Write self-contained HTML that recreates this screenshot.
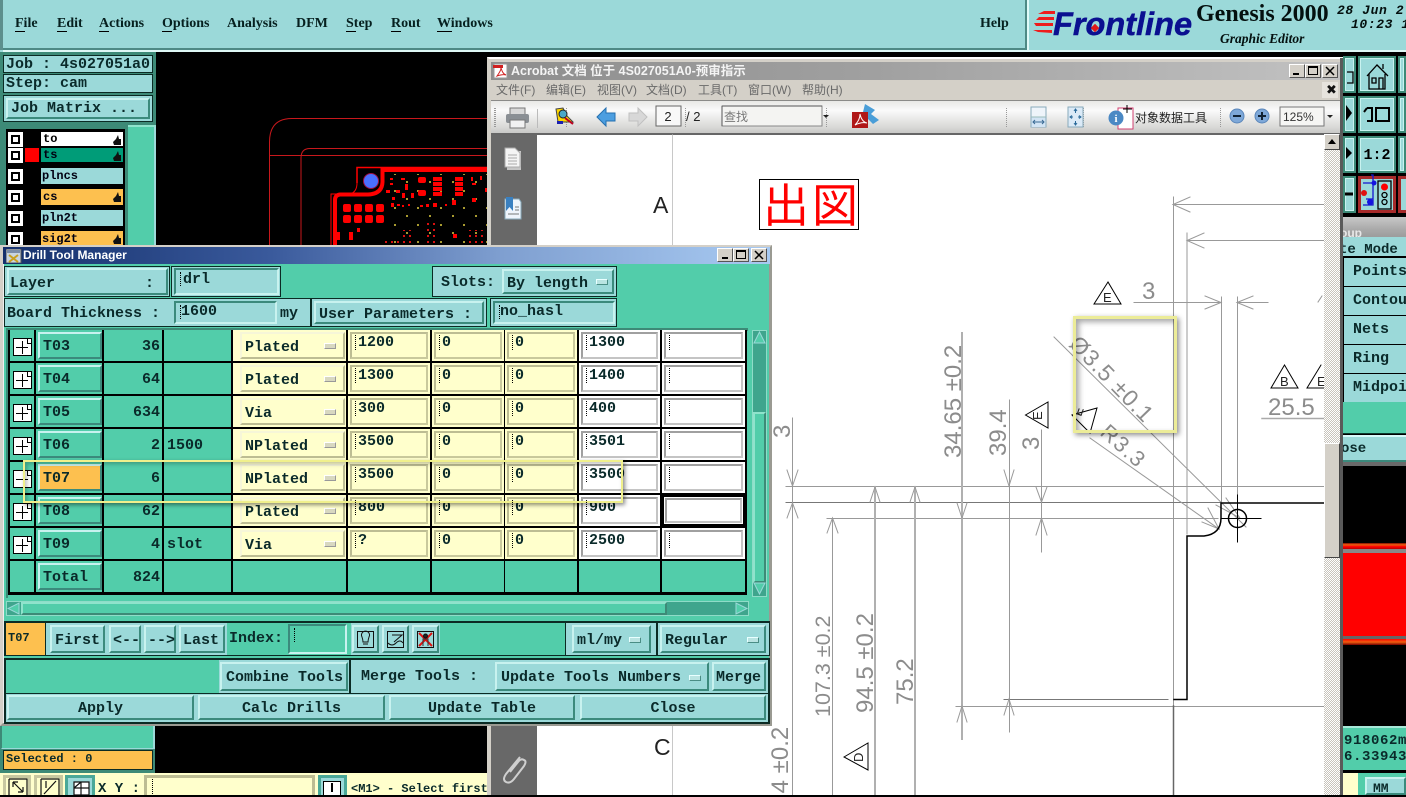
<!DOCTYPE html>
<html><head><meta charset="utf-8">
<style>
html,body{margin:0;padding:0;background:#000;}
*,*::before,*::after{box-sizing:border-box;}
body{position:relative;width:1406px;height:795px;overflow:hidden;font:bold 15px/1 "Liberation Mono","Noto Sans CJK SC",monospace;color:#0a2a2a;}
div,span,b,i,svg{position:absolute;display:block;}
svg text{font-weight:normal;}
.t{white-space:pre;font-weight:bold;font-style:normal;}
.up{background:#9bd9d9;border:2px solid;border-color:#c8f2ef #3b8a7c #3b8a7c #c8f2ef;white-space:pre;}
.dn{background:#9bd9d9;border:2px solid;border-color:#3b8a7c #c8f2ef #c8f2ef #3b8a7c;white-space:pre;}
.g{background:#52cdaa;}
.lt{background:#9bd9d9;}
.blk{background:#000;}
.ctr{text-align:center;}
.f::before{content:"";position:absolute;left:4px;top:2px;width:1px;height:14px;border-left:1px dotted #000;}
.ind{width:12px;height:6px;background:#b9e4e2;border:1px solid;border-color:#e8ffff #4a8d85 #4a8d85 #e8ffff;}
.r{left:0;width:739px;height:31px;}
.pb{left:5px;top:8px;width:19px;height:18px;border:1px solid #000;background:linear-gradient(#000,#000) 13px 0/1px 5px no-repeat,linear-gradient(#000,#000) 13px 4px/4px 1px no-repeat,#fff;}
.pb::before{content:"";position:absolute;left:2px;top:8px;width:12px;height:1px;background:#000;}
.pb::after{content:"";position:absolute;left:8px;top:2px;width:1px;height:13px;background:#000;}
.pb.m::after{display:none;}
.tb{left:30px;top:2px;width:64px;height:27px;padding:5px 0 0 3px;}
.cnt{left:96px;top:0;width:56px;height:31px;text-align:right;line-height:34px;}
.nt{left:159px;top:0;line-height:34px;white-space:pre;}
.ddc{left:225px;top:0;width:113px;height:31px;background:#ffffcc;}
.dd{left:232px;top:2px;width:105px;height:27px;background:#ffffcc;border:2px solid;border-color:#f6f6d8 #bdbd93 #bdbd93 #f6f6d8;padding:6px 0 0 3px;white-space:pre;}
.dd i{left:82px;top:9px;width:12px;height:6px;background:#d8d8c0;border:1px solid;border-color:#fff #999 #999 #fff;}
.c{top:0;height:31px;background:#ffffcc;}
.c i{left:2px;top:2px;right:2px;bottom:2px;border:2px solid;border-color:#bdbd93 #c9c99c #c9c99c #bdbd93;}
.w{background:#fff;}
.w i{border-color:#a0a0a0 #c4c4c4 #c4c4c4 #a0a0a0;}
.c s{position:absolute;left:10px;top:5px;text-decoration:none;white-space:pre;}
.c::before{content:"";position:absolute;left:7px;top:5px;width:1px;height:15px;border-left:1px dotted #000;z-index:2;}
.nc::before{display:none;}
.c1{left:340px;width:82px;}.c2{left:424px;width:72px;}.c3{left:497px;width:72px;}.c4{left:571px;width:81px;}.c5{left:654px;width:83px;}
.cb{left:8px;width:15px;height:15px;background:#fff;border:3px solid #fff;}
.cb::after{content:"";position:absolute;left:0;top:0;width:9px;height:9px;border:2px solid #000;}
.tb2{background:#9bd9d9;border:2px solid #3d8a77;box-shadow:inset 1px 1px 0 #c8f2ef,inset -1px -1px 0 #c8f2ef;}
</style></head>
<body>
<!-- top menu -->
<div style="left:0;top:0;width:1406px;height:52px;background:#9bd9d9"></div>
<div style="left:0;top:0;width:3px;height:50px;background:#5d8f8d"></div>
<div style="left:3px;top:48px;width:1024px;height:2px;background:#4e8a86"></div>
<div style="left:1025px;top:0;width:2px;height:50px;background:#4e8a86"></div>
<div style="left:1027px;top:0;width:2px;height:52px;background:#e0fbf9"></div>
<div style="left:3px;top:50px;width:1403px;height:2px;background:#dff8f6"></div>
<div style="font:bold 14px 'Liberation Serif',serif;left:0;top:0;width:1030px;height:48px;color:#06201f">
<span class="t" style="left:15px;top:16px">File</span><span style="left:15px;top:31px;width:10px;height:1px;background:#000"></span>
<span class="t" style="left:57px;top:16px">Edit</span><span style="left:57px;top:31px;width:10px;height:1px;background:#000"></span>
<span class="t" style="left:99px;top:16px">Actions</span><span style="left:99px;top:31px;width:10px;height:1px;background:#000"></span>
<span class="t" style="left:162px;top:16px">Options</span><span style="left:162px;top:31px;width:10px;height:1px;background:#000"></span>
<span class="t" style="left:227px;top:16px">Analysis</span>
<span class="t" style="left:296px;top:16px">DFM</span>
<span class="t" style="left:346px;top:16px">Step</span><span style="left:346px;top:31px;width:10px;height:1px;background:#000"></span>
<span class="t" style="left:391px;top:16px">Rout</span><span style="left:391px;top:31px;width:10px;height:1px;background:#000"></span>
<span class="t" style="left:437px;top:16px">Windows</span><span style="left:437px;top:31px;width:15px;height:1px;background:#000"></span>
<span class="t" style="left:980px;top:16px">Help</span>
</div>
<!-- logo -->
<svg style="left:1030px;top:8px" width="30" height="30"><g fill="#ee1c1c"><polygon points="14,3 25,3 25,6 8,6"/><polygon points="9,9 24,9 24,12 6,12"/><polygon points="4,15 23,15 23,18 6,18"/><polygon points="3,22 22,22 22,25 8,24"/></g></svg>
<span class="t" style="left:1053px;top:6px;font:italic bold 32.5px 'Liberation Sans',sans-serif;color:#0b1090;white-space:pre;-webkit-text-stroke:.5px #0b1090">Frontline</span>
<span style="left:1092px;top:25px;width:6px;height:6px;background:#e01818;transform:rotate(45deg)"></span>
<span class="t" style="left:1196px;top:1px;font:bold 24px 'Liberation Serif',serif;color:#04100f;white-space:pre">Genesis 2000</span>
<span class="t" style="left:1220px;top:31px;font:italic bold 13.5px 'Liberation Serif',serif;color:#04100f;white-space:pre">Graphic Editor</span>
<span class="t" style="left:1337px;top:3px;font:italic bold 13px 'Liberation Mono',monospace;letter-spacing:.6px;color:#04100f">28 Jun 2</span>
<span class="t" style="left:1351px;top:17px;font:italic bold 13px 'Liberation Mono',monospace;letter-spacing:.6px;color:#04100f">10:23 1</span>

<!-- left panel -->
<div style="left:0;top:52px;width:156px;height:194px;background:#3d8a77"></div>
<div class="lt" style="left:3px;top:55px;width:150px;height:18px;border:1px solid #0b2b24"></div>
<div class="lt" style="left:3px;top:74px;width:150px;height:19px;border:1px solid #0b2b24"></div>
<span class="t" style="left:6px;top:57px">Job : 4s027051a0</span>
<span class="t" style="left:6px;top:76px">Step: cam</span>
<div class="lt" style="left:3px;top:95px;width:150px;height:27px;border:1px solid #0b2b24"></div>
<div class="up" style="left:6px;top:98px;width:144px;height:21px;padding:1px 0 0 3px">Job Matrix ...</div>
<div class="g" style="left:128px;top:125px;width:28px;height:125px;border-top:2px solid #8fe3cc;border-right:2px solid #9bd9d9"></div>
<div class="blk" style="left:6px;top:129px;width:119px;height:120px"></div>
<div style="left:41px;top:132px;width:82px;height:14px;background:#fff"></div><span class="t" style="left:43px;top:133px;font-size:12px;color:#000">to</span>
<div style="left:41px;top:148px;width:82px;height:14px;background:#009c78"></div><span class="t" style="left:43px;top:149px;font-size:12px;color:#001">ts</span>
<div style="left:25px;top:148px;width:14px;height:14px;background:#f00"></div>
<div class="lt" style="left:41px;top:168px;width:82px;height:16px"></div><span class="t" style="left:42px;top:170px;font-size:12px;color:#001">plncs</span>
<div style="left:41px;top:189px;width:82px;height:16px;background:#fdc04f"></div><span class="t" style="left:43px;top:191px;font-size:12px;color:#001">cs</span>
<div class="lt" style="left:41px;top:210px;width:82px;height:16px"></div><span class="t" style="left:42px;top:212px;font-size:12px;color:#001">pln2t</span>
<div style="left:41px;top:231px;width:82px;height:16px;background:#fdc04f"></div><span class="t" style="left:42px;top:233px;font-size:12px;color:#001">sig2t</span>
<div class="cb" style="top:132px"></div><div class="cb" style="top:148px"></div><div class="cb" style="top:169px"></div><div class="cb" style="top:190px"></div><div class="cb" style="top:211px"></div><div class="cb" style="top:232px"></div>
<svg style="left:112px;top:134px" width="10" height="110" fill="#111"><path d="M1 8 L4 5 L6 1 L7 5 L9 5 L9 11 L2 11Z"/><path d="M1 24 L4 21 L6 17 L7 21 L9 21 L9 27 L2 27Z"/><path d="M1 65 L4 62 L6 58 L7 62 L9 62 L9 68 L2 68Z"/><path d="M1 107 L4 104 L6 100 L7 104 L9 104 L9 110 L2 110Z"/></svg>

<!-- pcb canvas -->
<div class="blk" style="left:156px;top:52px;width:334px;height:195px"></div>
<svg style="left:156px;top:52px" width="334" height="195" viewBox="156 52 334 195">
<defs>
<pattern id="dots" x="0" y="0" width="6" height="6" patternUnits="userSpaceOnUse"><rect x="1" y="1" width="2" height="2" fill="#d81010"/></pattern>
<pattern id="dots2" x="0" y="0" width="23" height="17" patternUnits="userSpaceOnUse"><rect x="3" y="3" width="2" height="2" fill="#a89a30"/><rect x="15" y="11" width="2" height="2" fill="#a89a30"/></pattern>
</defs>
<g fill="none" stroke="#c8181c" stroke-width="1">
<path d="M269.5 247V142Q269.5 118.500 292 118.500H490"/>
<path d="M269 155.500H490"/>
<path d="M301 247V158Q301 148.500 310 148.500H490"/>
</g>
<path d="M357 183V167.500H490" fill="none" stroke="#f00" stroke-width="1.500"/>
<path d="M490 170H382.500V182Q382 194 368 194.500H340Q335 195 335 200V247" fill="none" stroke="#f00" stroke-width="4"/>
<path d="M357 183Q357 192 350 194H331V247" fill="none" stroke="#f00" stroke-width="1"/>
<rect x="386" y="174" width="104" height="73" fill="url(#dots2)"/>
<circle cx="371" cy="181" r="7.500" fill="#4a70ff" stroke="#a01040"/>
<g fill="#f00">
<rect x="343" y="204" width="8" height="8" rx="2"/><rect x="354" y="204" width="8" height="8" rx="2"/><rect x="365" y="204" width="8" height="8" rx="2"/><rect x="376" y="204" width="8" height="8" rx="2"/>
<rect x="343" y="215" width="8" height="8" rx="2"/><rect x="354" y="215" width="8" height="8" rx="2"/><rect x="365" y="215" width="8" height="8" rx="2"/><rect x="376" y="215" width="8" height="8" rx="2"/>
<rect x="418" y="177" width="8" height="6" rx="2"/><rect x="418" y="190" width="8" height="6" rx="2"/>
<rect x="433" y="177" width="9" height="4"/><rect x="433" y="182" width="9" height="4"/><rect x="433" y="187" width="9" height="4"/><rect x="433" y="192" width="9" height="4"/>
<rect x="455" y="177" width="8" height="4"/><rect x="455" y="182" width="8" height="4"/><rect x="455" y="187" width="8" height="4"/><rect x="455" y="192" width="8" height="4"/>
<rect x="336" y="232" width="4" height="8"/><rect x="349" y="232" width="4" height="8"/><rect x="453" y="234" width="4" height="4"/><rect x="357" y="228" width="3" height="4"/>
<rect x="386" y="190" width="4" height="3"/><rect x="396" y="190" width="4" height="3"/><rect x="405" y="184" width="3" height="6"/><rect x="402" y="193" width="3" height="5"/><rect x="411" y="193" width="3" height="5"/>
<rect x="390" y="178" width="3" height="2"/><rect x="390" y="183" width="3" height="2"/><rect x="401" y="178" width="4" height="2"/>
<rect x="392" y="197" width="3" height="3"/><rect x="391" y="203" width="3" height="4"/><rect x="397" y="204" width="3" height="2"/><rect x="402" y="205" width="2" height="2"/><rect x="408" y="204" width="2" height="2"/>
<rect x="420" y="205" width="3" height="2"/><rect x="426" y="204" width="3" height="3"/><rect x="433" y="203" width="4" height="4"/><rect x="445" y="204" width="2" height="2"/><rect x="452" y="200" width="4" height="5"/>
<rect x="472" y="198" width="4" height="4"/><rect x="472" y="183" width="4" height="2"/><rect x="485" y="188" width="3" height="4"/><rect x="471" y="177" width="2" height="4"/><rect x="480" y="176" width="2" height="4"/>
</g>
<rect x="426" y="219" width="12" height="28" fill="url(#dots)"/>
<rect x="402" y="230" width="12" height="17" fill="url(#dots)"/>
<rect x="468" y="230" width="20" height="17" fill="url(#dots)"/>
<rect x="383" y="241" width="26" height="5" fill="url(#dots)"/>
</svg>

<!-- right panel -->
<div class="blk" style="left:1343px;top:52px;width:63px;height:165px"></div>
<div class="tb2" style="left:1343px;top:56px;width:13px;height:37px"></div>
<div class="tb2" style="left:1343px;top:96px;width:13px;height:37px"></div>
<div class="tb2" style="left:1343px;top:136px;width:13px;height:37px"></div>
<div class="tb2" style="left:1343px;top:176px;width:13px;height:37px"></div>
<div class="tb2" style="left:1358px;top:56px;width:38px;height:37px"></div>
<div class="tb2" style="left:1358px;top:96px;width:38px;height:37px"></div>
<div class="tb2" style="left:1358px;top:136px;width:38px;height:37px"></div>
<div class="tb2" style="left:1398px;top:56px;width:8px;height:37px"></div>
<div class="tb2" style="left:1398px;top:96px;width:8px;height:37px"></div>
<div class="tb2" style="left:1398px;top:136px;width:8px;height:37px"></div>
<div style="left:1358px;top:176px;width:38px;height:37px;background:#9bd9d9;border:3px solid #a62a2a"></div>
<div style="left:1398px;top:176px;width:8px;height:37px;background:#9bd9d9;border:3px solid #a62a2a;border-right:0"></div>
<svg style="left:1343px;top:55px" width="63" height="160" fill="none" stroke="#000" stroke-width="1.300">
<path d="M4 17H10V28H4"/><path d="M24 21L34 10L45 21M26 19V34H42V19M29 23H33V28H29ZM36 23H40V34H36ZM40 14V9"/>
<path fill="#000" stroke="none" d="M3 50L9 58L3 66Z"/>
<path d="M33 53H46V66H33Z" stroke-width="2"/><path d="M24 53H29V66H24M24 53L21 57" stroke-width="2"/>
<path fill="#000" stroke="none" d="M3 92L9 98L3 104Z"/>
<text x="34" y="104" text-anchor="middle" fill="#000" stroke="none" font-family="Liberation Mono" style="font-weight:bold" font-size="15">1:2</text>
<path d="M2 139H10" stroke-width="3"/>
<path d="M28 120H30V150H20M30 128H20M30 144H23" stroke="#1414d0"/>
<circle cx="21" cy="138" r="3" fill="#e01010" stroke="none"/><circle cx="31" cy="128" r="2.500" fill="#1414e0" stroke="none"/><circle cx="27" cy="147" r="3" fill="#1414e0" stroke="none"/>
<rect x="35" y="126" width="13" height="28"/><circle cx="41.500" cy="132" r="3.500" fill="#f00" stroke="none"/><circle cx="41.500" cy="140" r="2.500"/><circle cx="41.500" cy="147" r="2.500"/>
</svg>
<div style="left:1343px;top:217px;width:63px;height:20px;background:linear-gradient(#c8c8c8,#aaa 60%,#9c9c9c)"></div>
<span class="t" style="left:1340px;top:226px;font:bold 12px 'Liberation Sans',sans-serif;color:#e8e8e8">oup</span>
<div class="lt" style="left:1343px;top:237px;width:63px;height:20px"></div>
<span class="t" style="left:1339px;top:243px;font-size:14px">te Mode</span>
<div class="blk" style="left:1343px;top:256px;width:63px;height:146px"></div>
<div class="lt" style="left:1344px;top:258px;width:62px;height:28px"></div>
<div class="lt" style="left:1344px;top:287px;width:62px;height:28px"></div>
<div class="lt" style="left:1344px;top:316px;width:62px;height:28px"></div>
<div class="lt" style="left:1344px;top:345px;width:62px;height:28px"></div>
<div class="lt" style="left:1344px;top:374px;width:62px;height:28px"></div>
<span class="t" style="left:1353px;top:264px">Points</span>
<span class="t" style="left:1353px;top:293px">Contou</span>
<span class="t" style="left:1353px;top:322px">Nets</span>
<span class="t" style="left:1353px;top:351px">Ring</span>
<span class="t" style="left:1353px;top:380px">Midpoi</span>
<div class="g" style="left:1343px;top:402px;width:63px;height:32px;border-bottom:1px solid #0c3a2d"></div>
<div class="lt" style="left:1343px;top:435px;width:63px;height:27px;border-top:2px solid #d8fafa;border-bottom:2px solid #3b8a7c"></div>
<span class="t" style="left:1341px;top:442px;font-size:14px">ose</span>
<div style="left:1343px;top:462px;width:63px;height:4px;background:#6a6a6a"></div>
<div class="blk" style="left:1343px;top:466px;width:63px;height:77px"></div>
<div style="left:1343px;top:543px;width:63px;height:6px;background:linear-gradient(#7a0c00,#f06010 30%,#f00 60%,#b00)"></div>
<div style="left:1343px;top:549px;width:63px;height:4px;background:#888"></div>
<div style="left:1343px;top:553px;width:63px;height:83px;background:#f00"></div>
<div style="left:1343px;top:636px;width:63px;height:3px;background:#666"></div>
<div style="left:1343px;top:639px;width:63px;height:6px;background:linear-gradient(#f00,#f06010 50%,#700)"></div>
<div class="blk" style="left:1343px;top:645px;width:63px;height:81px"></div>
<div class="g" style="left:1343px;top:726px;width:63px;height:44px;border-top:2px solid #a8e8d8"></div>
<span class="t" style="left:1344px;top:734px;font-size:14px;letter-spacing:.6px">918062m</span>
<span class="t" style="left:1344px;top:750px;font-size:14px;letter-spacing:.6px">6.33943</span>
<div class="blk" style="left:1343px;top:770px;width:63px;height:3px"></div>
<div style="left:1343px;top:773px;width:63px;height:22px;background:#52cdaa"></div>
<div style="left:1343px;top:773px;width:15px;height:22px;background:#ffffcc"></div>
<div class="up" style="left:1365px;top:777px;width:41px;height:18px;padding:3px 0 0 6px;font-size:13px">MM</div>

<!-- bottom left -->
<div class="g" style="left:0;top:725px;width:155px;height:25px;border-right:2px solid #9bd9d9;border-bottom:2px solid #9bd9d9;border-left:2px solid #3d8a77"></div>
<div style="left:0;top:749px;width:156px;height:24px;background:#3d8a77"></div>
<div style="left:3px;top:750px;width:150px;height:20px;background:#fdc04f;border:1px solid #0b2b24"></div>
<span class="t" style="left:6px;top:753px;font-size:12px">Selected : 0</span>
<div style="left:0;top:773px;width:490px;height:22px;background:#ffffcc"></div>
<div style="left:3px;top:775px;width:28px;height:20px;background:#ffffcc;border:3px solid #c8c8a0;border-bottom:0"></div>
<div style="left:34px;top:775px;width:29px;height:20px;background:#ffffcc;border:3px solid #c8c8a0;border-bottom:0"></div>
<div style="left:65px;top:775px;width:30px;height:20px;background:#9bd9d9;border:3px solid #4aa898;border-bottom:0"></div>
<svg style="left:3px;top:775px" width="95" height="20" fill="none" stroke="#111" stroke-width="1.200">
<path d="M6 4H24V20M6 4V20M10 7L20 17M10 7H15M10 7V12M20 17H15M20 17V12"/>
<path d="M38 4H56V20M38 4V20M53 6L41 19M43 6V13"/>
<path d="M71 7H86V20H71ZM71 13H86M78 7V20M71 13L78 7" fill="#fff"/>
</svg>
<span class="t" style="left:98px;top:782px;font-size:14px">X Y :</span>
<div style="left:144px;top:775px;width:171px;height:20px;background:#ffffcc;border:3px solid #bdbd93;border-bottom:0"></div>
<div style="left:152px;top:779px;width:1px;height:15px;border-left:1px dotted #000"></div>
<div style="left:318px;top:775px;width:29px;height:20px;background:#9bd9d9;border:3px solid #4aa898;border-bottom:0"></div>
<div style="left:323px;top:781px;width:18px;height:14px;background:#fff;border:1px solid #000;border-bottom:0"></div>
<div style="left:331px;top:783px;width:2px;height:9px;background:#000"></div>
<span class="t" style="left:351px;top:783px;font-size:12px">&lt;M1&gt; - Select first</span>
<div class="blk" style="left:155px;top:725px;width:333px;height:48px"></div>

<!-- Acrobat window -->
<div style="left:487px;top:57px;width:856px;height:738px;background:#d4d0c8;border-top:2px solid #fff;border-left:2px solid #d4d0c8"></div>
<div style="left:1340px;top:58px;width:3px;height:737px;background:#5a5a5a"></div>
<div style="left:491px;top:62px;width:849px;height:18px;background:linear-gradient(90deg,#8e8e8e,#a0a0a0 45%,#c2c2c2)"></div>
<svg style="left:493px;top:63px" width="16" height="16"><rect x="1" y="1" width="13" height="14" fill="#fff" stroke="#999"/><rect x="0" y="2" width="10" height="3" fill="#d02020"/><path d="M4 13C7 9 8 7 8 5C9 8 10 11 13 12C10 11 7 12 4 13Z" fill="none" stroke="#d02020"/></svg>
<span class="t" style="left:511px;top:64px;font:bold 12.5px 'Liberation Sans','Noto Sans CJK SC',sans-serif;color:#f4f4f4;line-height:15px">Acrobat 文档 位于 4S027051A0-预审指示</span>
<div style="left:1289px;top:64px;width:16px;height:14px;background:#d4d0c8;border:1px solid;border-color:#fff #555 #555 #fff"></div>
<div style="left:1293px;top:73px;width:6px;height:2px;background:#000"></div>
<div style="left:1305px;top:64px;width:16px;height:14px;background:#d4d0c8;border:1px solid;border-color:#fff #555 #555 #fff"></div>
<div style="left:1308px;top:66px;width:10px;height:9px;border:1px solid #000;border-top-width:2px"></div>
<div style="left:1322px;top:64px;width:16px;height:14px;background:#d4d0c8;border:1px solid;border-color:#fff #555 #555 #fff"></div>
<svg style="left:1325px;top:66px" width="10" height="10" stroke="#000" stroke-width="1.500"><path d="M1 1L9 9M9 1L1 9"/></svg>
<div style="left:491px;top:80px;width:849px;height:20px;background:#d4d0c8"></div>
<div style="font:12px/14px 'Liberation Sans','Noto Sans CJK SC',sans-serif;color:#6a6a6a;left:0;top:0">
<span class="t" style="left:496px;top:83px;font-weight:normal">文件(F)</span>
<span class="t" style="left:546px;top:83px;font-weight:normal">编辑(E)</span>
<span class="t" style="left:597px;top:83px;font-weight:normal">视图(V)</span>
<span class="t" style="left:646px;top:83px;font-weight:normal">文档(D)</span>
<span class="t" style="left:698px;top:83px;font-weight:normal">工具(T)</span>
<span class="t" style="left:748px;top:83px;font-weight:normal">窗口(W)</span>
<span class="t" style="left:802px;top:83px;font-weight:normal">帮助(H)</span>
</div>
<div style="left:1322px;top:82px;width:16px;height:16px;background:#e6e3dd"></div>
<span class="t" style="left:1326px;top:83px;font:bold 13px 'DejaVu Sans',sans-serif;color:#111">✖</span>
<div style="left:491px;top:100px;width:849px;height:35px;background:linear-gradient(#e8e8e6,#fafafa 30%,#d6d6d4 85%,#c8c8c6);border-top:1px solid #8a8a88;border-bottom:2px solid #666"></div>
<svg style="left:491px;top:100px" width="849" height="35">
<g fill="none" stroke="#999" stroke-dasharray="1 1"><path d="M3.500 8V28M4.500 8V28M75.500 8V28M194.500 8V28M335.500 8V28M515.500 8V28M592.500 8V28M729.500 8V28"/></g>
<rect x="46" y="9" width="1" height="19" fill="#bbb"/>
<!-- printer -->
<rect x="19" y="8" width="15" height="7" fill="#d8d8d8" stroke="#777"/><rect x="15" y="14" width="23" height="9" rx="2" fill="#8a8f94"/><rect x="19" y="20" width="15" height="8" fill="#f2f2f2" stroke="#777"/>
<!-- tool -->
<path d="M65 9L72 8L76 16L82 22H67Z" fill="#ffd800" stroke="#444"/><circle cx="72" cy="14" r="4" fill="#4aa8c8" stroke="#222"/><path d="M74 18L82 24" stroke="#c00020" stroke-width="2"/><rect x="66" y="21" width="6" height="3" fill="#1a20b0"/>
<!-- arrows -->
<path d="M106 17L115 8V13H124V21H115V26Z" fill="#4c9ee0" stroke="#2570b0"/>
<path d="M156 17L147 8V13H138V21H147V26Z" fill="#d8d8d8" stroke="#c0c0c0"/>
<rect x="165" y="6" width="25" height="20" fill="#f8f8f8" stroke="#666"/>
<text x="177" y="21" text-anchor="middle" font-family="Liberation Sans" font-size="13" fill="#222">2</text>
<text x="195" y="21" font-family="Liberation Sans" font-size="13" fill="#222">/ 2</text>
<rect x="231" y="6" width="100" height="20" fill="#f4f4f2" stroke="#888"/>
<path d="M231 6H331M231 6V26" stroke="#555" fill="none"/>
<text x="233" y="21" font-family="Noto Sans CJK SC" font-size="12" fill="#777">查找</text>
<path d="M332 15H338L335 18Z" fill="#222"/>
<!-- pdf -->
<path d="M374 4L384 10L380 14L388 20L382 24L374 16L370 20Z" fill="#4a9ed8"/>
<rect x="361" y="12" width="16" height="16" fill="#b01818"/><path d="M364 25C368 21 369 17 369 14C370 19 372 22 376 23C372 22 368 23 364 25Z" fill="none" stroke="#fff"/>
<!-- fit icons -->
<rect x="540" y="7" width="15" height="20" fill="#eef4fa" stroke="#8ab"/><rect x="540.500" y="17" width="14" height="10" fill="#d2e4f4"/><path d="M540 17H555" stroke="#9bb"/><path d="M542 22H553M544 20L542 22L544 24M551 20L553 22L551 24" fill="none" stroke="#3a6a94"/>
<rect x="577" y="7" width="15" height="20" fill="#dbeaf7" stroke="#8ab"/><path d="M584.500 9V13M583 11L584.500 9L586 11M584.500 21V25M583 23L584.500 25L586 23M579 17H582M581 15.500L579 17L581 18.500M587 17H590M588 15.500L590 17L588 18.500" fill="none" stroke="#2a6a9a"/>
<!-- data tool -->
<rect x="627" y="8" width="15" height="21" fill="#fff" stroke="#d04070"/>
<circle cx="625" cy="18" r="7.500" fill="#4a88c4"/><text x="625" y="22" text-anchor="middle" font-family="Liberation Serif" style="font-weight:bold" font-size="11" fill="#fff">i</text>
<path d="M636 5V13M632 9H641" stroke="#000"/>
<text x="644" y="22" font-family="Noto Sans CJK SC" font-size="12" fill="#222">对象数据工具</text>
<!-- zoom -->
<circle cx="746" cy="16" r="7" fill="#7ea8d8" stroke="#5a86ba"/><rect x="742" y="15" width="8" height="2" fill="#123"/>
<circle cx="771" cy="16" r="7" fill="#7ea8d8" stroke="#5a86ba"/><path d="M767 16H775M771 12V20" stroke="#123" stroke-width="2"/>
<rect x="789" y="7" width="44" height="19" fill="#f6f6f4" stroke="#777"/>
<text x="792" y="21" font-family="Liberation Sans" font-size="12" fill="#333">125%</text>
<path d="M836 15H842L839 18Z" fill="#222"/>
</svg>
<!-- side panel & page -->
<div style="left:491px;top:135px;width:46px;height:660px;background:#686868"></div>
<svg style="left:491px;top:135px" width="46" height="660">
<rect x="16" y="16" width="14" height="19" fill="#c6c6c6"/><path d="M14 13H24L29 18V32H14Z" fill="#f4f4f4" stroke="#aaa"/><path d="M17 20H26M17 23H26M17 26H26M17 29H26" stroke="#aaa"/>
<path d="M14 64H28L30 67V84H14Z" fill="#eef4fb" stroke="#8ab"/><path d="M15 62H22V76L18.500 72L15 76Z" fill="#3a80c0"/><path d="M24 72H28M24 75H28M17 79H28" stroke="#777"/>
<path d="M29 622L15 639Q11 645 15 647Q19 649 23 644L33 631Q36 626 33 625Q30 623 27 627L19 637" fill="none" stroke="#cfcfcf" stroke-width="2"/>
</svg>
<div style="left:537px;top:135px;width:787px;height:660px;background:#fff"></div>
<div style="left:1324px;top:134px;width:16px;height:661px;background:repeating-conic-gradient(#c8c4bc 0 25%,#fff 0 50%) 0 0/2px 2px"></div>
<div style="left:1324px;top:134px;width:16px;height:16px;background:#d4d0c8;border:1px solid;border-color:#fff #444 #444 #fff"></div>
<svg style="left:1327px;top:138px" width="10" height="8"><path d="M1 6H9L5 1Z" fill="#000"/></svg>
<div style="left:1324px;top:443px;width:16px;height:115px;background:#d4d0c8;border:1px solid;border-color:#fff #444 #444 #fff"></div>

<!-- drawing -->
<svg style="left:0;top:0" width="1324" height="795" viewBox="0 0 1324 795">
<g fill="none" stroke-linecap="square">
<path d="M672.500 135V795" stroke="#c8c8c8"/>
<g stroke="#999" stroke-width="1">
<path d="M1173.500 197V705"/>
<path d="M1173 204.500H1324M1187 240.500H1324M1187 233V534"/>
<path d="M1134 302.500H1221M1237 302.500H1268"/>
<path d="M1221.500 297V503M1237.500 297V530"/>
<path d="M786 486.500H1324"/>
<path d="M786 502.500H1221" stroke="#777"/>
<path d="M827 518.500H1218"/>
<path d="M792.500 418V795"/><path d="M832.500 518V795"/>
<path d="M1009.500 400V732"/><path d="M1041.500 430V552"/>
<path d="M1004 699.500H1168" stroke="#777"/>
<path d="M956 706.500H1324"/>
<path d="M1054 337L1246 527"/><path d="M1090 438L1219 529"/>
<path d="M1262 418.500H1324" stroke="#aaa" stroke-width="1.500"/>
</g>
<g stroke="#b0b0b0" stroke-width="2"><path d="M875 487V795M915 487V795M962 333V739"/></g>
<!-- arrows -->
<g stroke="#999">
<path d="M1190 197L1173 204.500L1190 212M1204 233L1187 240.500L1204 248"/>
<path d="M1205 296L1221 302.500L1205 309M1253 296L1237 302.500L1253 309M1322 296L1318 302"/>
<path d="M787 470L792.500 486L798 470M787 518L792.500 503L798 518"/>
<path d="M827 533L832.500 518L838 533"/>
<path d="M870 502L875 487L880 502M910 502L915 487L920 502"/>
<path d="M957 503L962 518L967 503"/>
<path d="M1004 470L1009 486L1014 470"/>
<path d="M1036 487L1041.500 502L1047 487M1036 535L1041.500 518L1047 535"/>
<path d="M957 722L962 706L967 722M1004 715L1009 699L1014 715"/>
<path d="M1208 508L1219 529L1202 522"/>
<path d="M1226 498L1240 518L1216 505"/>
</g>
<!-- outline -->
<g stroke="#000" stroke-width="1.500">
<path d="M1174 699.500H1187V536H1204Q1221 534 1221 518V503H1324"/>
<circle cx="1237.500" cy="518.500" r="9"/>
<path d="M1221 518.500H1261M1237.500 495V542" stroke-width="1"/>
</g>
<path d="M1173.500 706V795" stroke="#666" stroke-width="1.500"/>
<!-- triangles -->
<g stroke="#000" stroke-width="1">
<path d="M1108 282L1094 304H1121Z"/>
<path d="M1025.500 415L1048 402V428Z"/>
<path d="M1072 415L1097 408L1090 433Z"/>
<path d="M1284.500 365L1271 388H1298Z"/>
<path d="M1321 365L1307 388H1324"/>
<path d="M844 757L868 743V770Z"/>
</g>
</g>
<g font-family="Liberation Sans" fill="#222">
<text x="1103" y="302" font-size="13">E</text>
<text transform="translate(1042,420) rotate(-90)" font-size="13">E</text>
<text transform="translate(1081,417) rotate(-70)" font-size="13">E</text>
<text x="1280" y="386" font-size="13">B</text>
<text x="1317" y="386" font-size="13">E</text>
<text transform="translate(863,762) rotate(-90)" font-size="13">D</text>
</g>
<g font-family="Liberation Sans" fill="#8c8c8c" font-size="24">
<text x="1142" y="299">3</text>
<text x="1268" y="415">25.5</text>
<text transform="translate(961,458) rotate(-90)">34.65 ±0.2</text>
<text transform="translate(1006,456) rotate(-90)">39.4</text>
<text transform="translate(1039,450) rotate(-90)">3</text>
<text transform="translate(790,438) rotate(-90)">3</text>
<text transform="translate(830,717) rotate(-90)" font-size="21.500">107.3 ±0.2</text>
<text transform="translate(873,713) rotate(-90)">94.5 ±0.2</text>
<text transform="translate(913,705) rotate(-90)">75.2</text>
<text transform="translate(788,800) rotate(-90)">.4 ±0.2</text>
<text transform="translate(1068,345) rotate(46)" font-size="23" letter-spacing="1">Ø3.5 ±0.1</text>
<text transform="translate(1099,434) rotate(42)" font-size="22" letter-spacing="1.500">R3.3</text>
</g>
<g font-family="Liberation Sans" fill="#222" font-size="23">
<text x="653" y="213">A</text>
<text x="654" y="755">C</text>
</g>
</svg>
<div style="left:759px;top:179px;width:100px;height:51px;background:#fff;border:1px solid #000"></div>
<span class="t" style="left:763px;top:178px;font:400 46px/50px 'Noto Sans CJK JP',sans-serif;color:#f00;letter-spacing:3px;white-space:pre">出図</span>

<!-- Drill Tool Manager -->
<div style="left:0;top:245px;width:772px;height:481px;background:#52cdaa;border:3px solid #d4d0c8;border-right-color:#9a9a92;border-bottom-color:#9a9a92;box-shadow:inset 1px 1px 0 #eee"></div>
<div style="left:3px;top:247px;width:767px;height:17px;background:linear-gradient(90deg,#15306c,#3a5a9c 35%,#7f9fd0 65%,#a8caf2)"></div>
<svg style="left:6px;top:249px" width="16" height="14"><rect x="0" y="0" width="15" height="14" fill="#c8d4e0" stroke="#555"/><rect x="1" y="1" width="13" height="3" fill="#7a8ca8"/><path d="M3 6L12 13M12 6L3 13" stroke="#c8a020" stroke-width="2"/></svg>
<span class="t" style="left:23px;top:248px;font:bold 12px/14px 'Liberation Sans',sans-serif;color:#fff">Drill Tool Manager</span>
<div style="left:717px;top:248px;width:16px;height:14px;background:#d4d0c8;border:1px solid;border-color:#fff #555 #555 #fff"></div>
<div style="left:722px;top:257px;width:6px;height:2px;background:#000"></div>
<div style="left:733px;top:248px;width:16px;height:14px;background:#d4d0c8;border:1px solid;border-color:#fff #555 #555 #fff"></div>
<div style="left:736px;top:250px;width:10px;height:9px;border:1px solid #000;border-top-width:2px"></div>
<div style="left:751px;top:248px;width:16px;height:14px;background:#d4d0c8;border:1px solid;border-color:#fff #555 #555 #fff"></div>
<svg style="left:754px;top:250px" width="10" height="10" stroke="#000" stroke-width="1.500"><path d="M1 1L9 9M9 1L1 9"/></svg>

<!-- header rows -->
<div class="lt" style="left:4px;top:266px;width:166px;height:31px;border:1px solid #0b2b24"></div>
<div class="up" style="left:7px;top:268px;width:161px;height:27px;padding:6px 0 0 1px">Layer          :</div>
<div class="lt" style="left:171px;top:266px;width:110px;height:31px;border:1px solid #0b2b24"></div>
<div class="dn f" style="left:174px;top:268px;width:105px;height:27px;padding:2px 0 0 7px">drl</div>
<div class="lt" style="left:432px;top:266px;width:185px;height:31px;border:1px solid #0b2b24"></div>
<span class="t" style="left:441px;top:275px">Slots:</span>
<div class="up" style="left:502px;top:269px;width:112px;height:25px;padding:5px 0 0 3px">By length<i class="ind" style="left:92px;top:8px"></i></div>
<div class="lt" style="left:4px;top:298px;width:307px;height:29px;border:1px solid #0b2b24"></div>
<span class="t" style="left:7px;top:306px">Board Thickness :</span>
<div class="dn f" style="left:174px;top:301px;width:103px;height:23px;padding:1px 0 0 5px">1600</div>
<span class="t" style="left:280px;top:306px">my</span>
<div class="lt" style="left:311px;top:298px;width:176px;height:29px;border:1px solid #0b2b24"></div>
<div class="up" style="left:314px;top:301px;width:170px;height:23px;padding:4px 0 0 3px">User Parameters :</div>
<div class="lt" style="left:490px;top:298px;width:127px;height:29px;border:1px solid #0b2b24"></div>
<div class="dn f" style="left:493px;top:301px;width:122px;height:23px;padding:1px 0 0 5px">no_hasl</div>

<!-- table -->
<div style="left:6px;top:328px;width:742px;height:3px;background:#3d8a77"></div>
<div style="left:6px;top:328px;width:2px;height:270px;background:#3d8a77"></div>
<div class="blk" style="left:8px;top:330px;width:739px;height:265px"></div>
<div style="left:8px;top:330px;width:739px;height:265px">
<div class="r" style="top:0"><div class="g" style="left:2px;top:0;width:24px;height:31px"></div><div class="g" style="left:28px;top:0;width:66px;height:31px"></div><div class="g" style="left:96px;top:0;width:58px;height:31px"></div><div class="g" style="left:156px;top:0;width:67px;height:31px"></div><div class="pb"></div><div class="up tb" style="background:#52cdaa">T03</div><span class="cnt">36</span><div class="ddc"></div><div class="dd">Plated<i></i></div><div class="c c1"><i></i><s>1200</s></div><div class="c c2"><i></i><s>0</s></div><div class="c c3"><i></i><s>0</s></div><div class="c c4 w"><i></i><s>1300</s></div><div class="c c5 w"><i></i></div></div>
<div class="r" style="top:33px"><div class="g" style="left:2px;top:0;width:24px;height:31px"></div><div class="g" style="left:28px;top:0;width:66px;height:31px"></div><div class="g" style="left:96px;top:0;width:58px;height:31px"></div><div class="g" style="left:156px;top:0;width:67px;height:31px"></div><div class="pb"></div><div class="up tb" style="background:#52cdaa">T04</div><span class="cnt">64</span><div class="ddc"></div><div class="dd">Plated<i></i></div><div class="c c1"><i></i><s>1300</s></div><div class="c c2"><i></i><s>0</s></div><div class="c c3"><i></i><s>0</s></div><div class="c c4 w"><i></i><s>1400</s></div><div class="c c5 w"><i></i></div></div>
<div class="r" style="top:66px"><div class="g" style="left:2px;top:0;width:24px;height:31px"></div><div class="g" style="left:28px;top:0;width:66px;height:31px"></div><div class="g" style="left:96px;top:0;width:58px;height:31px"></div><div class="g" style="left:156px;top:0;width:67px;height:31px"></div><div class="pb"></div><div class="up tb" style="background:#52cdaa">T05</div><span class="cnt">634</span><div class="ddc"></div><div class="dd">Via<i></i></div><div class="c c1"><i></i><s>300</s></div><div class="c c2"><i></i><s>0</s></div><div class="c c3"><i></i><s>0</s></div><div class="c c4 w"><i></i><s>400</s></div><div class="c c5 w"><i></i></div></div>
<div class="r" style="top:99px"><div class="g" style="left:2px;top:0;width:24px;height:31px"></div><div class="g" style="left:28px;top:0;width:66px;height:31px"></div><div class="g" style="left:96px;top:0;width:58px;height:31px"></div><div class="g" style="left:156px;top:0;width:67px;height:31px"></div><div class="pb"></div><div class="up tb" style="background:#52cdaa">T06</div><span class="cnt">2</span><span class="nt">1500</span><div class="ddc"></div><div class="dd">NPlated<i></i></div><div class="c c1"><i></i><s>3500</s></div><div class="c c2"><i></i><s>0</s></div><div class="c c3"><i></i><s>0</s></div><div class="c c4 w"><i></i><s>3501</s></div><div class="c c5 w"><i></i></div></div>
<div class="r" style="top:132px"><div class="g" style="left:2px;top:0;width:24px;height:31px"></div><div class="g" style="left:28px;top:0;width:66px;height:31px"></div><div class="g" style="left:96px;top:0;width:58px;height:31px"></div><div class="g" style="left:156px;top:0;width:67px;height:31px"></div><div class="pb m"></div><div class="up tb" style="background:#fdc04f">T07</div><span class="cnt">6</span><div class="ddc"></div><div class="dd">NPlated<i></i></div><div class="c c1"><i></i><s>3500</s></div><div class="c c2"><i></i><s>0</s></div><div class="c c3"><i></i><s>0</s></div><div class="c c4 w"><i></i><s>3500</s></div><div class="c c5 w"><i></i></div></div>
<div class="r" style="top:165px"><div class="g" style="left:2px;top:0;width:24px;height:31px"></div><div class="g" style="left:28px;top:0;width:66px;height:31px"></div><div class="g" style="left:96px;top:0;width:58px;height:31px"></div><div class="g" style="left:156px;top:0;width:67px;height:31px"></div><div class="pb"></div><div class="up tb" style="background:#52cdaa">T08</div><span class="cnt">62</span><div class="ddc"></div><div class="dd">Plated<i></i></div><div class="c c1"><i></i><s>800</s></div><div class="c c2"><i></i><s>0</s></div><div class="c c3"><i></i><s>0</s></div><div class="c c4 w"><i></i><s>900</s></div><div class="c c5 w nc" style="border:2px solid #000"><i style="left:1px;top:1px;right:1px;bottom:1px;border-width:2px"></i></div></div>
<div class="r" style="top:198px"><div class="g" style="left:2px;top:0;width:24px;height:31px"></div><div class="g" style="left:28px;top:0;width:66px;height:31px"></div><div class="g" style="left:96px;top:0;width:58px;height:31px"></div><div class="g" style="left:156px;top:0;width:67px;height:31px"></div><div class="pb"></div><div class="up tb" style="background:#52cdaa">T09</div><span class="cnt">4</span><span class="nt">slot</span><div class="ddc"></div><div class="dd">Via<i></i></div><div class="c c1"><i></i><s>?</s></div><div class="c c2"><i></i><s>0</s></div><div class="c c3"><i></i><s>0</s></div><div class="c c4 w"><i></i><s>2500</s></div><div class="c c5 w"><i></i></div></div>
<div class="r" style="top:231px"><div class="g" style="left:2px;top:0;width:24px;height:31px"></div><div class="g" style="left:28px;top:0;width:66px;height:31px"></div><div class="g" style="left:96px;top:0;width:58px;height:31px"></div><div class="g" style="left:156px;top:0;width:67px;height:31px"></div><div class="up tb" style="background:#52cdaa">Total</div><span class="cnt">824</span><div class="g" style="left:225px;top:0;width:113px;height:31px"></div><div class="g" style="left:340px;top:0;width:82px;height:31px"></div><div class="g" style="left:424px;top:0;width:72px;height:31px"></div><div class="g" style="left:497px;top:0;width:72px;height:31px"></div><div class="g" style="left:571px;top:0;width:81px;height:31px"></div><div class="g" style="left:654px;top:0;width:83px;height:31px"></div></div>
</div>

<!-- scrollbars -->
<div style="left:752px;top:330px;width:15px;height:267px;background:#3fa58d;border:1px solid #8fdcc8"></div>
<div style="left:753px;top:412px;width:13px;height:171px;background:#52cdaa;border:2px solid;border-color:#8fe3cc #3d8a77 #3d8a77 #8fe3cc"></div>
<svg style="left:753px;top:331px" width="13" height="14"><path d="M1 12H12L6.500 1Z" fill="#52cdaa" stroke="#9bd9d9"/></svg>
<svg style="left:753px;top:582px" width="13" height="14"><path d="M1 1H12L6.500 12Z" fill="#52cdaa" stroke="#9bd9d9"/></svg>
<div style="left:6px;top:601px;width:743px;height:15px;background:#3fa58d;border:1px solid #8fdcc8"></div>
<div style="left:21px;top:602px;width:646px;height:13px;background:#52cdaa;border:2px solid;border-color:#8fe3cc #3d8a77 #3d8a77 #8fe3cc"></div>
<svg style="left:7px;top:602px" width="14" height="13"><path d="M12 1V12L1 6.500Z" fill="#52cdaa" stroke="#9bd9d9"/></svg>
<svg style="left:735px;top:602px" width="14" height="13"><path d="M1 1V12L12 6.500Z" fill="#52cdaa" stroke="#9bd9d9"/></svg>

<!-- nav row -->
<div style="left:4px;top:621px;width:766px;height:35px;background:#0b2b24"></div>
<div style="left:6px;top:623px;width:39px;height:32px;background:#fdc04f;font-size:12px;padding:9px 0 0 2px">T07</div>
<div class="lt" style="left:46px;top:623px;width:181px;height:32px"></div>
<div class="up" style="left:50px;top:625px;width:55px;height:28px;padding:6px 0 0 3px">First</div>
<div class="up" style="left:109px;top:625px;width:32px;height:28px;padding:6px 0 0 2px">&lt;--</div>
<div class="up" style="left:144px;top:625px;width:32px;height:28px;padding:6px 0 0 2px">--&gt;</div>
<div class="up" style="left:179px;top:625px;width:46px;height:28px;padding:6px 0 0 2px">Last</div>
<div class="g" style="left:227px;top:623px;width:124px;height:32px"></div>
<span class="t" style="left:229px;top:631px">Index:</span>
<div class="dn f" style="left:288px;top:624px;width:59px;height:30px;background:#52cdaa"></div>
<div class="lt" style="left:351px;top:623px;width:89px;height:32px"></div>
<div class="up" style="left:352px;top:625px;width:27px;height:28px"></div>
<div class="up" style="left:382px;top:625px;width:27px;height:28px"></div>
<div class="up" style="left:412px;top:625px;width:27px;height:28px"></div>
<svg style="left:352px;top:625px" width="88" height="28" fill="none" stroke="#111">
<rect x="5.500" y="6.500" width="16" height="16"/><path d="M10 12A4 4 0 1 1 17 12Q16 15 16 17H11Q11 15 10 12ZM11 19H16"/>
<rect x="35.500" y="6.500" width="16" height="16"/><path d="M36 18Q40 22 44 18Q48 14 51 18M40 10H50L42 17"/>
<rect x="65.500" y="6.500" width="16" height="16"/><path d="M67 8L80 21M80 8L67 21" stroke="#e01010" stroke-width="2"/><circle cx="73.500" cy="11" r="2" fill="#222"/><path d="M71 21V14H76V21" stroke="#333"/>
</svg>
<div class="g" style="left:440px;top:623px;width:125px;height:32px"></div>
<div class="lt" style="left:566px;top:623px;width:90px;height:32px"></div>
<div class="lt" style="left:656px;top:623px;width:113px;height:32px;border-left:2px solid #0b2b24"></div>
<div class="up" style="left:572px;top:625px;width:79px;height:28px;padding:6px 0 0 3px">ml/my<i class="ind" style="left:55px;top:10px"></i></div>
<div class="up" style="left:660px;top:625px;width:106px;height:28px;padding:6px 0 0 3px">Regular<i class="ind" style="left:85px;top:10px"></i></div>

<!-- merge row -->
<div style="left:4px;top:658px;width:766px;height:66px;background:#0b2b24"></div>
<div class="g" style="left:6px;top:660px;width:213px;height:33px"></div>
<div class="lt" style="left:219px;top:660px;width:549px;height:33px"></div>
<div class="up" style="left:220px;top:662px;width:128px;height:29px;padding:6px 0 0 4px">Combine Tools</div>
<div style="left:349px;top:660px;width:2px;height:33px;background:#0b2b24"></div>
<span class="t" style="left:361px;top:669px">Merge Tools :</span>
<div class="up" style="left:495px;top:662px;width:214px;height:29px;padding:6px 0 0 4px">Update Tools Numbers<i class="ind" style="left:192px;top:11px"></i></div>
<div class="up" style="left:712px;top:662px;width:54px;height:29px;padding:6px 0 0 2px">Merge</div>
<div class="lt" style="left:6px;top:694px;width:762px;height:28px"></div>
<div class="up ctr" style="left:7px;top:695px;width:187px;height:25px;padding-top:4px">Apply</div>
<div class="up ctr" style="left:198px;top:695px;width:187px;height:25px;padding-top:4px">Calc Drills</div>
<div class="up ctr" style="left:389px;top:695px;width:186px;height:25px;padding-top:4px">Update Table</div>
<div class="up ctr" style="left:580px;top:695px;width:186px;height:25px;padding-top:4px">Close</div>

<!-- yellow highlight rects -->
<div style="left:23px;top:460px;width:600px;height:43px;border:2px solid #f0f08c;box-shadow:2px 2px 4px rgba(0,0,0,.45),inset 2px 2px 4px rgba(0,0,0,.25)"></div>
<div style="left:1073px;top:316px;width:104px;height:117px;border:3px solid #ecec98;box-shadow:2px 2px 5px rgba(0,0,0,.45),inset 3px 3px 6px rgba(0,0,0,.35)"></div>
</body></html>
